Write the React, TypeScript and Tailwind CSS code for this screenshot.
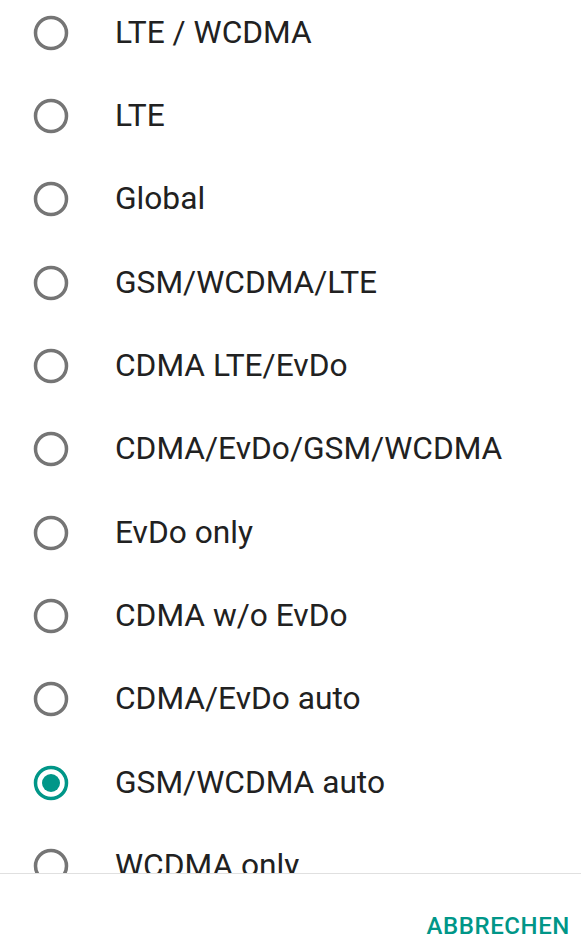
const options = [
  "LTE / WCDMA",
  "LTE",
  "Global",
  "GSM/WCDMA/LTE",
  "CDMA LTE/EvDo",
  "CDMA/EvDo/GSM/WCDMA",
  "EvDo only",
  "CDMA w/o EvDo",
  "CDMA/EvDo auto",
  "GSM/WCDMA auto",
  "WCDMA only",
];

const selected = "GSM/WCDMA auto";

function Radio({ checked }: { checked: boolean }) {
  return (
    <svg width="36" height="36" viewBox="0 0 36 36" className="shrink-0">
      <circle
        cx="18"
        cy="18"
        r="15.5"
        fill="none"
        stroke={checked ? "#009688" : "#757575"}
        strokeWidth="3.5"
      />
      {checked && <circle cx="18" cy="18" r="9" fill="#009688" />}
    </svg>
  );
}

export default function App() {
  return (
    <div className="flex h-[952px] w-[581px] flex-col bg-white font-['Roboto',sans-serif]">
      <div className="h-[873px] overflow-hidden">
        <div className="-mt-[9px]">
          {options.map((o) => (
            <div key={o} className="flex h-[83.33px] items-center pl-[33px]">
              <Radio checked={o === selected} />
              <span className="ml-[46px] text-[31.7px] leading-none text-[#212121]">{o}</span>
            </div>
          ))}
        </div>
      </div>
      <div className="h-px bg-[#e0e0e0]" />
      <div className="flex flex-1 items-center justify-end pr-[11px] pt-[25px]">
        <button className="text-[24px] font-medium tracking-[0.6px] text-[#009688]">ABBRECHEN</button>
      </div>
    </div>
  );
}
